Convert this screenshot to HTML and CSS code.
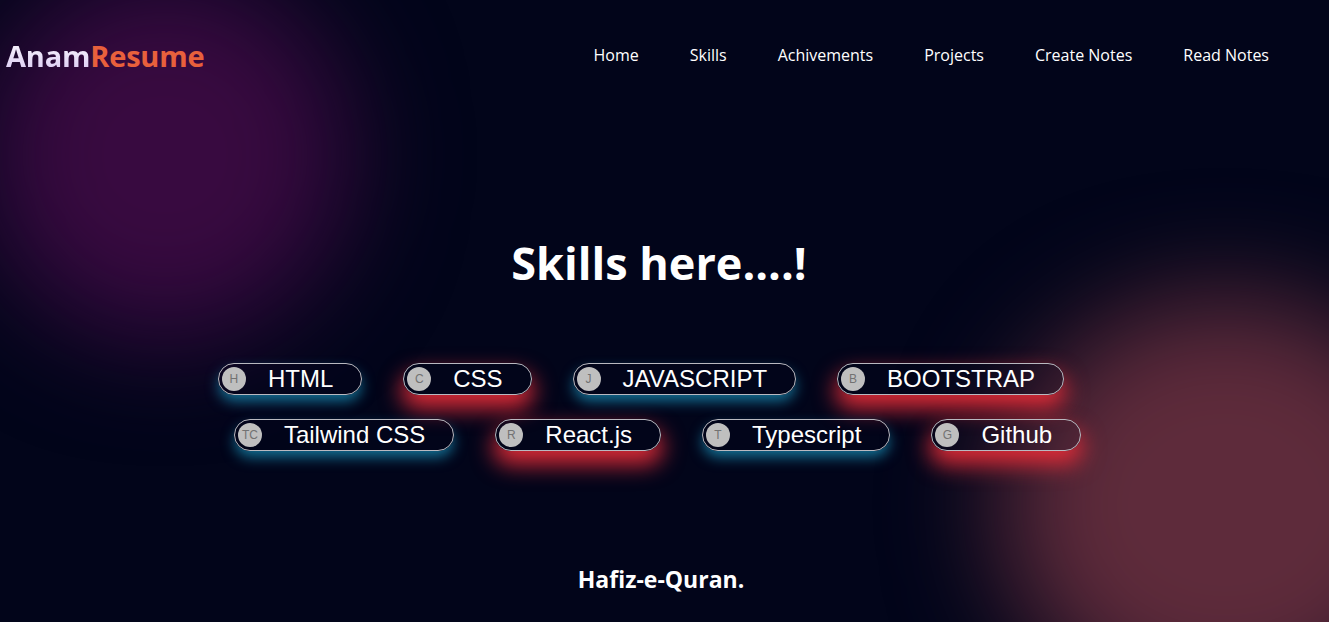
FILE: index.html
```html
<!DOCTYPE html>
<html>
<head>
<meta charset="utf-8">
<link rel="stylesheet" href="styles.css">
</head>
<body>
<div class="page">
  <div class="blob blob-purple"></div>
  <div class="blob blob-red"></div>
  <header class="header">
    <div class="logo"><span class="logo-a">Anam</span><span class="logo-b">Resume</span></div>
    <nav class="nav">
      <a>Home</a>
      <a>Skills</a>
      <a>Achivements</a>
      <a>Projects</a>
      <a>Create Notes</a>
      <a>Read Notes</a>
    </nav>
  </header>
  <main class="skills">
    <h1 class="title">Skills here....!</h1>
    <div class="row row-1">
      <div class="pill blue"><span class="av">H</span><span class="lbl">HTML</span></div>
      <div class="pill red"><span class="av">C</span><span class="lbl">CSS</span></div>
      <div class="pill blue"><span class="av">J</span><span class="lbl">JAVASCRIPT</span></div>
      <div class="pill red"><span class="av">B</span><span class="lbl">BOOTSTRAP</span></div>
    </div>
    <div class="row row-2">
      <div class="pill blue"><span class="av">TC</span><span class="lbl">Tailwind CSS</span></div>
      <div class="pill red"><span class="av">R</span><span class="lbl">React.js</span></div>
      <div class="pill blue"><span class="av">T</span><span class="lbl">Typescript</span></div>
      <div class="pill red"><span class="av">G</span><span class="lbl">Github</span></div>
    </div>
    <p class="foot">Hafiz-e-Quran.</p>
  </main>
</div>
</body>
</html>
```
FILE: styles.css
```css
* { box-sizing: border-box; }
html, body { margin: 0; padding: 0; }
body {
  background: #02051a;
  font-family: "Open Sans", "Noto Sans", sans-serif;
  color: #fff;
  overflow: hidden;
}
.page {
  position: relative;
  width: 1329px;
  height: 622px;
  overflow: hidden;
}
.blob {
  position: absolute;
  border-radius: 50%;
  filter: blur(55px);
  z-index: 0;
}
.blob-purple {
  left: -20px;
  top: -30px;
  width: 370px;
  height: 370px;
  background: #380a40;
}
.blob-red {
  left: 1000px;
  top: 295px;
  width: 450px;
  height: 420px;
  background: #5e2b3b;
}
.header {
  position: relative;
  z-index: 1;
  display: flex;
  justify-content: space-between;
  align-items: center;
  height: 110px;
  padding: 0 60px 0 6px;
}
.logo {
  font-size: 29px;
  font-weight: 700;
  letter-spacing: -0.2px;
}
.logo-a {
  background: linear-gradient(180deg, #ffffff, #d8c6f2);
  -webkit-background-clip: text;
  background-clip: text;
  color: transparent;
}
.logo-b { color: #e8603c; }
.nav {
  display: flex;
  gap: 51px;
  font-size: 16px;
}
.nav a { color: #fff; }
.skills {
  position: relative;
  z-index: 1;
  display: flex;
  flex-direction: column;
  align-items: center;
}
.title {
  margin: 120px 0 0;
  font-size: 45px;
  font-weight: 700;
  line-height: 66px;
  padding-right: 11px;
}
.row {
  display: flex;
  justify-content: center;
  gap: 41px;
  width: 100%;
}
.row-1 { margin-top: 67px; padding-right: 47px; }
.row-2 { margin-top: 24px; padding-right: 14px; }
.pill {
  display: flex;
  align-items: center;
  height: 32px;
  padding: 0 28px 0 3px;
  border: 1px solid #b9b9c0;
  border-radius: 17px;
  background: transparent;
}
.pill.blue { box-shadow: 0 7px 14px -1px rgba(24, 140, 180, 0.8); }
.pill.red { box-shadow: 0 12px 22px 2px rgba(230, 45, 55, 0.92); }
.av {
  width: 24px;
  height: 24px;
  border-radius: 50%;
  background: #bfbfbf;
  color: #727272;
  font-family: "Liberation Sans", Arial, sans-serif;
  font-size: 12px;
  display: flex;
  align-items: center;
  justify-content: center;
  margin-right: 22px;
  flex: none;
}
.lbl {
  font-family: "Liberation Sans", Arial, sans-serif;
  font-size: 24px;
  color: #fff;
}
.foot {
  margin: 112px 0 0;
  font-size: 23px;
  font-weight: 700;
  padding-right: 7px;
}
```
